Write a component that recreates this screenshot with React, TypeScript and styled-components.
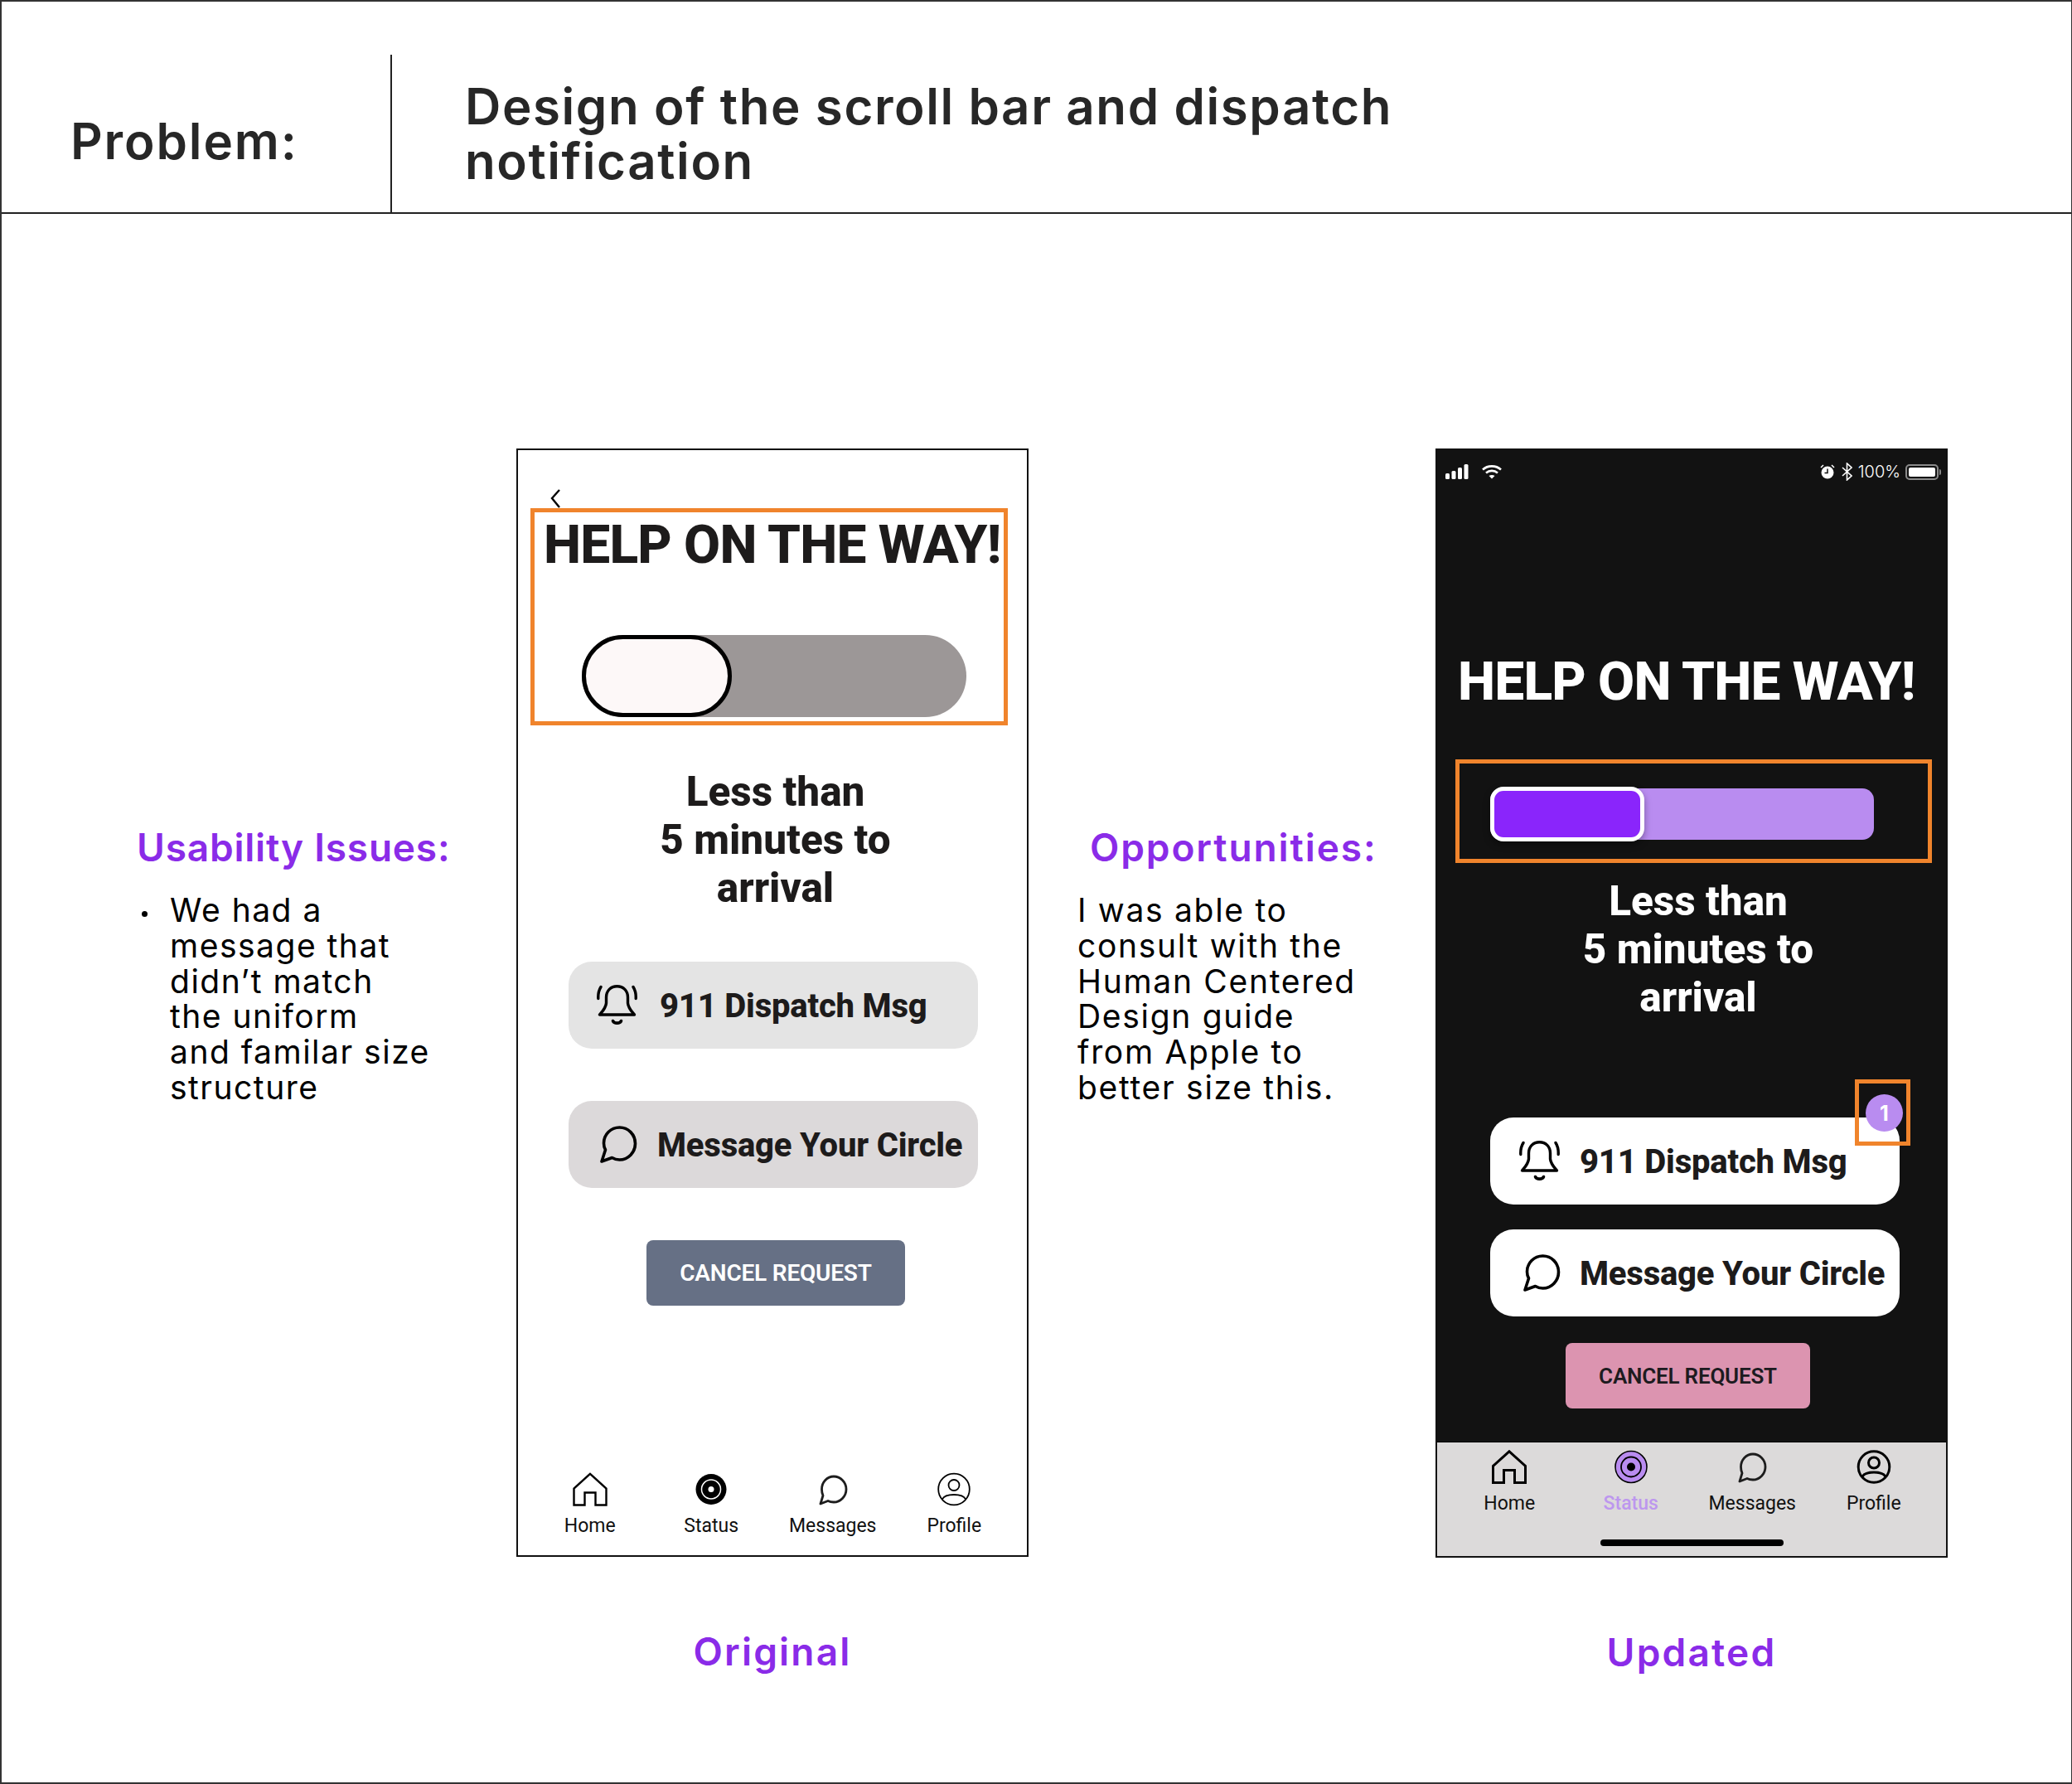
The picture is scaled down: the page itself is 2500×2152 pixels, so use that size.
import React from "react";
import styled, { createGlobalStyle } from "styled-components";

const GlobalStyle = createGlobalStyle`
  html, body {
    margin: 0;
    padding: 0;
    background: #fff;
  }
  * {
    box-sizing: border-box;
  }
`;

const PURPLE = "#8a2be8";
const ORANGE = "#f0842c";

const Frame = styled.div`
  width: 2500px;
  height: 2152px;
  border: 2px solid #333;
  border-right-width: 1px;
  display: flex;
  flex-direction: column;
  font-family: Inter, "Liberation Sans", sans-serif;
  color: #000;
`;

const Header = styled.header`
  height: 256px;
  flex: none;
  border-bottom: 2px solid #222;
  display: flex;
  align-items: flex-end;
`;

const ProblemCell = styled.div`
  width: 471px;
  height: 190px;
  border-right: 2px solid #222;
  padding: 71px 0 0 83px;
  font-size: 60px;
  font-weight: 600;
  line-height: 66px;
  letter-spacing: 1.9px;
  color: #272727;
`;

const TitleCell = styled.h1`
  margin: 0;
  height: 190px;
  padding: 29px 0 0 88px;
  font-size: 60px;
  font-weight: 600;
  line-height: 66px;
  letter-spacing: 1.6px;
  color: #272727;
`;

const Body = styled.main`
  flex: 1;
  display: flex;
  padding-top: 283px;
`;

const Notes = styled.section<{ $width: number; $pad: number }>`
  width: ${(p) => p.$width}px;
  flex: none;
  padding: 453px 0 0 ${(p) => p.$pad}px;
`;

const NoteTitle = styled.h2<{ $indent?: number; $track: number }>`
  margin: 0 0 27px ${(p) => p.$indent ?? 0}px;
  font-size: 46px;
  line-height: 56px;
  font-weight: 600;
  letter-spacing: ${(p) => p.$track}px;
  color: ${PURPLE};
`;

const NoteRow = styled.div`
  display: flex;
`;

const Dot = styled.span`
  width: 7px;
  height: 7px;
  flex: none;
  margin: 22px 27px 0 6px;
  border-radius: 50%;
  background: #000;
`;

const NoteText = styled.p<{ $track: number }>`
  margin: 0;
  font-size: 39px;
  line-height: 42.8px;
  font-weight: 400;
  letter-spacing: ${(p) => p.$track}px;
  white-space: nowrap;
`;

const PhoneColumn = styled.section`
  width: 618px;
  flex: none;
  display: flex;
  flex-direction: column;
`;

const Caption = styled.div`
  margin-top: 86px;
  text-align: center;
  font-size: 46px;
  line-height: 56px;
  font-weight: 600;
  letter-spacing: 2.2px;
  color: ${PURPLE};
`;

const Phone = styled.div<{ $dark?: boolean }>`
  height: ${(p) => (p.$dark ? "1338px" : "1337px")};
  flex: none;
  display: flex;
  flex-direction: column;
  align-items: flex-start;
  border: 2px solid ${(p) => (p.$dark ? "#121212" : "#111")};
  background: ${(p) => (p.$dark ? "#121212" : "#fff")};
  color: ${(p) => (p.$dark ? "#fff" : "#1d1b1b")};
  font-family: Roboto, "Liberation Sans", sans-serif;
`;

const BackIcon = styled.svg`
  width: 14px;
  height: 24px;
  margin: 46px 0 0 38px;
  flex: none;
  display: block;
`;

const Highlight = styled.div<{ $width: number; $height: number; $left: number; $top: number }>`
  width: ${(p) => p.$width}px;
  height: ${(p) => p.$height}px;
  margin: ${(p) => p.$top}px 0 0 ${(p) => p.$left}px;
  border: 5px solid ${ORANGE};
  flex: none;
`;

const Heading = styled.div<{ $left: number; $top: number }>`
  margin: ${(p) => p.$top}px 0 0 ${(p) => p.$left}px;
  font-size: 64px;
  line-height: 76px;
  font-weight: 800;
  letter-spacing: -0.8px;
  white-space: nowrap;
`;

const Track = styled.div<{ $round: boolean; $width: number; $height: number; $left: number; $top: number; $bg: string }>`
  position: relative;
  width: ${(p) => p.$width}px;
  height: ${(p) => p.$height}px;
  margin: ${(p) => p.$top}px 0 0 ${(p) => p.$left}px;
  border-radius: ${(p) => (p.$round ? "50px" : "14px")};
  background: ${(p) => p.$bg};
`;

const Thumb = styled.div<{ $round: boolean; $width: number; $bg: string; $ring: string }>`
  position: absolute;
  left: 0;
  top: ${(p) => (p.$round ? "0" : "-2px")};
  bottom: ${(p) => (p.$round ? "0" : "-2px")};
  width: ${(p) => p.$width}px;
  border: 5px solid ${(p) => p.$ring};
  border-radius: ${(p) => (p.$round ? "50px" : "16px")};
  background: ${(p) => p.$bg};
  box-shadow: ${(p) => (p.$round ? "none" : "0 4px 8px rgba(0,0,0,0.35)")};
`;

const Eta = styled.div<{ $top: number; $left: number }>`
  margin-top: ${(p) => p.$top}px;
  padding-left: ${(p) => p.$left}px;
  width: 100%;
  text-align: center;
  font-size: 49.5px;
  line-height: 58px;
  font-weight: 800;
`;

const ActionButton = styled.div<{ $left: number; $top: number; $bg: string; $pad: number; $gap: number }>`
  position: relative;
  width: 494px;
  height: 105px;
  flex: none;
  margin: ${(p) => p.$top}px 0 0 ${(p) => p.$left}px;
  padding-left: ${(p) => p.$pad}px;
  display: flex;
  align-items: center;
  gap: ${(p) => p.$gap}px;
  border-radius: 28px;
  background: ${(p) => p.$bg};
  color: #1d1b1b;
  font-size: 40px;
  font-weight: 800;
  letter-spacing: -0.2px;
  white-space: nowrap;
`;

const ActionLabel = styled.span`
  padding-top: 2px;
`;

const Badge = styled.div`
  position: absolute;
  top: -28px;
  right: -4px;
  width: 45px;
  height: 45px;
  display: flex;
  align-items: center;
  justify-content: center;
  border-radius: 50%;
  background: #b98cf0;
  color: #fff;
  font-family: Inter, sans-serif;
  font-size: 25px;
  font-weight: 700;
  letter-spacing: 0;
`;

const BadgeMark = styled.div`
  position: absolute;
  top: -46px;
  right: -13px;
  width: 67px;
  height: 80px;
  border: 5px solid ${ORANGE};
`;

const CancelButton = styled.div<{ $left: number; $top: number; $width: number; $bg: string; $fg: string; $size: number }>`
  width: ${(p) => p.$width}px;
  height: 79px;
  flex: none;
  margin: ${(p) => p.$top}px 0 0 ${(p) => p.$left}px;
  display: flex;
  align-items: center;
  justify-content: center;
  border-radius: 8px;
  background: ${(p) => p.$bg};
  color: ${(p) => p.$fg};
  font-size: ${(p) => p.$size}px;
  font-weight: 600;
  letter-spacing: -0.2px;
  white-space: nowrap;
`;

const TabBar = styled.nav<{ $dark?: boolean }>`
  margin-top: auto;
  width: 100%;
  flex: none;
  display: flex;
  flex-direction: column;
  height: ${(p) => (p.$dark ? "138px" : "100px")};
  padding-top: ${(p) => (p.$dark ? "9px" : "0")};
  background: ${(p) => (p.$dark ? "#dcdada" : "transparent")};
  border-top: ${(p) => (p.$dark ? "1px solid #000" : "0")};
`;

const TabGrid = styled.div<{ $dark?: boolean }>`
  display: grid;
  grid-template-columns: repeat(4, 146.5px);
  padding-left: ${(p) => (p.$dark ? "14px" : "13.5px")};
`;

const Tab = styled.div<{ $color?: string; $strong?: boolean }>`
  display: flex;
  flex-direction: column;
  align-items: center;
  gap: 11px;
  font-size: 23px;
  line-height: 26px;
  font-weight: ${(p) => (p.$strong ? 500 : 400)};
  color: ${(p) => p.$color ?? "#111"};
`;

const TabIcon = styled.svg`
  width: 42px;
  height: 41px;
  display: block;
`;

const HomeBar = styled.div`
  width: 221px;
  height: 8px;
  margin: 30px auto 0;
  border-radius: 4px;
  background: #000;
`;

const StatusBar = styled.div`
  width: 100%;
  height: 40px;
  flex: none;
  margin-top: 13px;
  padding: 0 6px 0 10px;
  display: flex;
  align-items: flex-start;
  justify-content: space-between;
  color: #fff;
`;

const StatusGroup = styled.div`
  display: flex;
  align-items: center;
  height: 26px;
`;

const WifiIcon = styled.svg`
  margin-left: 16px;
`;

const BluetoothIcon = styled.svg`
  margin-left: 8px;
`;

const PercentText = styled.span`
  font-family: Inter, sans-serif;
  font-size: 20px;
  font-weight: 300;
  margin: 0 6px 0 7px;
`;

const Battery = styled.div`
  width: 40px;
  height: 19px;
  padding: 2px;
  border: 2px solid #8a8a8a;
  border-radius: 5px;
  &::before {
    content: "";
    display: block;
    height: 100%;
    border-radius: 2px;
    background: #fff;
  }
`;

const BatteryCap = styled.div`
  width: 2px;
  height: 7px;
  margin-left: 1px;
  border-radius: 0 2px 2px 0;
  background: #8a8a8a;
`;

function BellIcon() {
  return (
    <svg width="49" height="49" viewBox="0 0 49 49" fill="none" stroke="#000" strokeWidth="3.4" strokeLinecap="round" strokeLinejoin="round">
      <path d="M3.5 36H45.5C42 32 38 28 37.5 22V15C37.5 7 32 1.8 24.5 1.8C17 1.8 11.5 7 11.5 15V22C11 28 7 32 3.5 36Z" />
      <path d="M19.5 43.5C21 47 28 47 29.5 43.5" strokeWidth="3.6" />
      <path d="M5 2.5C2.5 6.5 1.5 11 1.8 16.5M44 2.5C46.5 6.5 47.5 11 47.2 16.5" />
    </svg>
  );
}

function BubbleIcon({ size = 45, stroke = 3.6 }: { size?: number; stroke?: number }) {
  return (
    <svg width={size} height={size} viewBox="0 0 45 45" fill="none" stroke="#000" strokeWidth={stroke} strokeLinejoin="round">
      <path d="M6.5 29L2 43L14.5 38.5C17 40 20 41 23.5 41C34 41 42.5 32 42.5 21.5C42.5 10.5 34 2 23.5 2C13 2 4.5 10.5 4.5 21C4.5 24 5.2 26.8 6.5 29Z" />
    </svg>
  );
}

function HomeTabIcon({ stroke }: { stroke: number }) {
  return (
    <TabIcon viewBox="0 0 42 41" fill="none" stroke="#000" strokeWidth={stroke}>
      <path d="M21 1.8L40.5 19.5V39.5H27.5V24.5H14.5V39.5H1.5V19.5Z" />
    </TabIcon>
  );
}

function StatusTabIcon({ dark }: { dark?: boolean }) {
  if (dark) {
    return (
      <TabIcon viewBox="0 0 42 41" fill="none">
        <circle cx="21" cy="20.5" r="19" fill="#b98cf0" stroke="#000" strokeWidth="1.6" />
        <circle cx="21" cy="20.5" r="12" stroke="#000" strokeWidth="1.8" />
        <circle cx="21" cy="20.5" r="5" fill="#000" />
      </TabIcon>
    );
  }
  return (
    <TabIcon viewBox="0 0 42 41" fill="none">
      <circle cx="21" cy="20.5" r="18.5" fill="#000" />
      <circle cx="21" cy="20.5" r="11.5" stroke="#fff" strokeWidth="1.5" />
      <circle cx="21" cy="20.5" r="3.5" fill="#fff" />
    </TabIcon>
  );
}

function MessageTabIcon() {
  return (
    <TabIcon viewBox="0 0 42 41" fill="none" stroke="#1d1d1d" strokeWidth="2.8" strokeLinejoin="round">
      <path d="M9 28L6 38L15 34.5C17 35.5 19.5 36 22 36C30 36 37 29 37 20.5C37 12 30 5 22 5C14 5 7.5 12 7.5 20.5C7.5 23.2 8 25.8 9 28Z" />
    </TabIcon>
  );
}

function ProfileTabIcon({ stroke }: { stroke: number }) {
  return (
    <TabIcon viewBox="0 0 42 41" fill="none" stroke="#000" strokeWidth={stroke}>
      <circle cx="21" cy="20.5" r="18.8" />
      <circle cx="21" cy="15.5" r="6.5" />
      <path d="M7 32.5C9 28 15 27 21 27C27 27 33 28 35 32.5" />
    </TabIcon>
  );
}

function TabItems({ dark }: { dark?: boolean }) {
  return (
    <TabGrid $dark={dark}>
      <Tab>
        <HomeTabIcon stroke={dark ? 3 : 2.4} />
        Home
      </Tab>
      <Tab $color={dark ? "#bd97ee" : undefined} $strong={dark}>
        <StatusTabIcon dark={dark} />
        Status
      </Tab>
      <Tab>
        <MessageTabIcon />
        Messages
      </Tab>
      <Tab>
        <ProfileTabIcon stroke={dark ? 3 : 1.8} />
        Profile
      </Tab>
    </TabGrid>
  );
}

function StatusIcons() {
  return (
    <StatusBar>
      <StatusGroup>
        <svg width="28" height="18" viewBox="0 0 28 18" fill="#fff">
          <rect x="0" y="11" width="5" height="7" rx="1.5" />
          <rect x="7.5" y="8" width="5" height="10" rx="1.5" />
          <rect x="15" y="4" width="5" height="14" rx="1.5" />
          <rect x="22.5" y="0" width="5" height="18" rx="1.5" />
        </svg>
        <WifiIcon width="24" height="18" viewBox="0 0 24 18" fill="none" stroke="#fff" strokeWidth="2.6">
          <path d="M1 6.5C7 1 17 1 23 6.5" />
          <path d="M5 10.5C9 7 15 7 19 10.5" />
          <path d="M12 17.5L8.5 14C10.5 12.5 13.5 12.5 15.5 14Z" fill="#fff" stroke="none" />
        </WifiIcon>
      </StatusGroup>
      <StatusGroup>
        <svg width="18" height="18" viewBox="0 0 18 18" fill="none">
          <circle cx="9" cy="10" r="7.5" fill="#fff" />
          <path d="M9 5.5V10.5H5.5" stroke="#121212" strokeWidth="1.5" />
          <path d="M1 4L4 1M17 4L14 1" stroke="#fff" strokeWidth="1.5" />
        </svg>
        <BluetoothIcon width="13" height="22" viewBox="0 0 13 22" fill="none" stroke="#fff" strokeWidth="1.6">
          <path d="M1 6L12 16L6.5 21V1L12 6L1 16" />
        </BluetoothIcon>
        <PercentText>100%</PercentText>
        <Battery />
        <BatteryCap />
      </StatusGroup>
    </StatusBar>
  );
}

function App() {
  return (
    <>
      <GlobalStyle />
      <Frame>
        <Header>
          <ProblemCell>Problem:</ProblemCell>
          <TitleCell>
            Design of the scroll bar and dispatch
            <br />
            notification
          </TitleCell>
        </Header>
        <Body>
          <Notes $width={621} $pad={163}>
            <NoteTitle $track={0.8}>Usability Issues:</NoteTitle>
            <NoteRow>
              <Dot />
              <NoteText $track={1.5}>
                We had a
                <br />
                message that
                <br />
                didn’t match
                <br />
                the uniform
                <br />
                and familar size
                <br />
                structure
              </NoteText>
            </NoteRow>
          </Notes>

          <PhoneColumn>
            <Phone>
              <BackIcon viewBox="0 0 14 24" fill="none" stroke="#000" strokeWidth="2.4">
                <path d="M12 2L3 12L12 23" />
              </BackIcon>
              <Highlight $width={576} $height={262} $left={15} $top={0}>
                <Heading $left={11} $top={2}>
                  HELP ON THE WAY!
                </Heading>
                <Track $round $width={464} $height={99} $left={57} $top={70} $bg="#9c9797">
                  <Thumb $round $width={181} $bg="#fdf8f8" $ring="#000" />
                </Track>
              </Highlight>
              <Eta $top={51} $left={7}>
                Less than
                <br />5 minutes to
                <br />
                arrival
              </Eta>
              <ActionButton $left={61} $top={60} $bg="#e4e4e4" $pad={34} $gap={27}>
                <BellIcon />
                <ActionLabel>911 Dispatch Msg</ActionLabel>
              </ActionButton>
              <ActionButton $left={61} $top={63} $bg="#dcd9da" $pad={38} $gap={24}>
                <BubbleIcon />
                <ActionLabel>Message Your Circle</ActionLabel>
              </ActionButton>
              <CancelButton $left={155} $top={63} $width={312} $bg="#667085" $fg="#fff" $size={28}>
                CANCEL REQUEST
              </CancelButton>
              <TabBar>
                <TabItems />
              </TabBar>
            </Phone>
            <Caption>Original</Caption>
          </PhoneColumn>

          <Notes $width={491} $pad={59}>
            <NoteTitle $indent={15} $track={1.9}>
              Opportunities:
            </NoteTitle>
            <NoteText $track={1.7}>
              I was able to
              <br />
              consult with the
              <br />
              Human Centered
              <br />
              Design guide
              <br />
              from Apple to
              <br />
              better size this.
            </NoteText>
          </Notes>

          <PhoneColumn>
            <Phone $dark>
              <StatusIcons />
              <Heading $left={25} $top={189}>
                HELP ON THE WAY!
              </Heading>
              <Highlight $width={575} $height={125} $left={22} $top={55}>
                <Track $round={false} $width={463} $height={62} $left={37} $top={30} $bg="#b98cf0">
                  <Thumb $round={false} $width={186} $bg="#8a25fb" $ring="#fff" />
                </Track>
              </Highlight>
              <Eta $top={17} $left={16}>
                Less than
                <br />5 minutes to
                <br />
                arrival
              </Eta>
              <ActionButton $left={64} $top={116} $bg="#fff" $pad={35} $gap={24}>
                <BellIcon />
                <ActionLabel>911 Dispatch Msg</ActionLabel>
                <Badge>1</Badge>
                <BadgeMark />
              </ActionButton>
              <ActionButton $left={64} $top={30} $bg="#fff" $pad={40} $gap={23}>
                <BubbleIcon />
                <ActionLabel>Message Your Circle</ActionLabel>
              </ActionButton>
              <CancelButton $left={155} $top={32} $width={295} $bg="#dc94b0" $fg="#1d1b20" $size={26}>
                CANCEL REQUEST
              </CancelButton>
              <TabBar $dark>
                <TabItems dark />
                <HomeBar />
              </TabBar>
            </Phone>
            <Caption>Updated</Caption>
          </PhoneColumn>
        </Body>
      </Frame>
    </>
  );
}

export default App;
